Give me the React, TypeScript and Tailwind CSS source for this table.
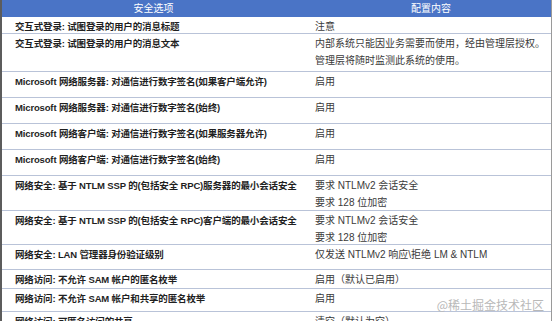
const rows = [
  { h: "h-[17px]", left: "交互式登录: 试图登录的用户的消息标题", right: ["注意"] },
  {
    h: "h-[38px]",
    left: "交互式登录: 试图登录的用户的消息文本",
    right: ["内部系统只能因业务需要而使用，经由管理层授权。", "管理层将随时监测此系统的使用。"],
  },
  { h: "h-[26px]", left: "Microsoft 网络服务器: 对通信进行数字签名(如果客户端允许)", right: ["启用"] },
  { h: "h-[26px]", left: "Microsoft 网络服务器: 对通信进行数字签名(始终)", right: ["启用"] },
  { h: "h-[26px]", left: "Microsoft 网络客户端: 对通信进行数字签名(如果服务器允许)", right: ["启用"] },
  { h: "h-[26px]", left: "Microsoft 网络客户端: 对通信进行数字签名(始终)", right: ["启用"] },
  {
    h: "h-[35px]",
    left: "网络安全: 基于 NTLM SSP 的(包括安全 RPC)服务器的最小会话安全",
    right: ["要求 NTLMv2 会话安全", "要求 128 位加密"],
  },
  {
    h: "h-[34px]",
    left: "网络安全: 基于 NTLM SSP 的(包括安全 RPC)客户端的最小会话安全",
    right: ["要求 NTLMv2 会话安全", "要求 128 位加密"],
  },
  { h: "h-[25px]", left: "网络安全: LAN 管理器身份验证级别", right: ["仅发送 NTLMv2 响应\\拒绝 LM & NTLM"] },
  { h: "h-[19px]", left: "网络访问: 不允许 SAM 帐户的匿名枚举", right: ["启用（默认已启用）"] },
  { h: "h-[23px]", left: "网络访问: 不允许 SAM 帐户和共享的匿名枚举", right: ["启用"] },
  { h: "h-[23px]", left: "网络访问: 可匿名访问的共享", right: ["清空（默认为空）"] },
];

const App = () => {
  return (
    <div className="relative w-[554px] h-[321px] overflow-hidden bg-white font-['Liberation_Sans','Noto_Sans_CJK_SC',sans-serif]">
      <div className="w-[552px] border-l-2 border-r border-l-[#5c5c5c] border-r-[#9a9a9a]">
        {/* Header */}
        <div className="grid grid-cols-[303px_1fr] h-[17px] bg-[#4a74c6] text-white text-[10px] leading-[17px]">
          <div className="text-center">安全选项</div>
          <div className="text-center pl-[6px]">配置内容</div>
        </div>

        {/* Rows */}
        {rows.map((row, i) => (
          <div
            key={i}
            className={`grid grid-cols-[303px_1fr] ${row.h} border-b border-[#b9c3d8]`}
          >
            <div className="pl-[13px] pt-[1px] text-[9.5px] leading-[17px] font-bold tracking-[-0.15px] text-[#1f1f1f] whitespace-nowrap">
              {row.left}
            </div>
            <div className="pl-[10px] pt-[1px] text-[10px] leading-[17px] text-[#3a3a3a] whitespace-nowrap overflow-hidden">
              {row.right.map((line, j) => (
                <div key={j}>{line}</div>
              ))}
            </div>
          </div>
        ))}
      </div>

      {/* Watermark */}
      <div className="absolute right-[10px] top-[297px] text-[12px] leading-[16px] text-[#b8b8b8] font-['Noto_Sans_CJK_SC',sans-serif]">
        @稀土掘金技术社区
      </div>
    </div>
  );
};

export default App;
